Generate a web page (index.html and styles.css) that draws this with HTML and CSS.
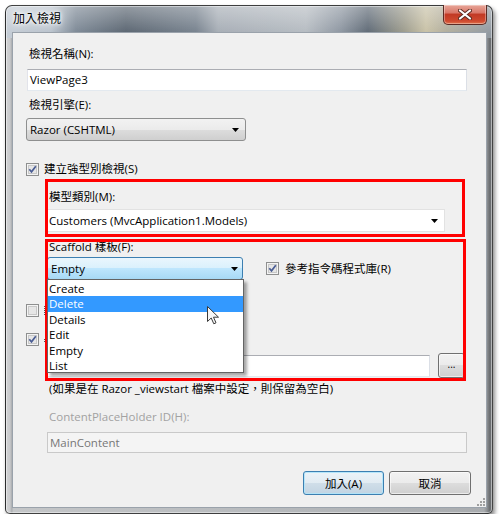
FILE: index.html
```html
<!DOCTYPE html>
<html lang="zh-Hant">
<head>
<meta charset="utf-8">
<title>加入檢視</title>
<link rel="stylesheet" href="styles.css">
</head>
<body>
<div class="window">
  <div class="titlebar">
    <span class="title">加入檢視</span>
    <div class="close">
      <svg width="14" height="11" viewBox="0 0 14 11"><path d="M2 1.5 L12 9.5 M12 1.5 L2 9.5" stroke="#5a2a20" stroke-width="4" stroke-linecap="round"/><path d="M2 1.5 L12 9.5 M12 1.5 L2 9.5" stroke="#ffffff" stroke-width="2.2" stroke-linecap="round"/></svg>
    </div>
  </div>
  <div class="client">
    <div class="label l-name">檢視名稱(N):</div>
    <div class="textbox tb-name">ViewPage3</div>
    <div class="label l-engine">檢視引擎(E):</div>
    <div class="combo razor"><span>Razor (CSHTML)</span><svg class="arrow" width="7" height="4" viewBox="0 0 7 4"><path d="M0 0h7L3.5 4z" fill="#000"/></svg></div>
    <div class="check-row cr-strong">
      <svg class="cb" width="13" height="13" viewBox="0 0 13 13"><rect x="0.5" y="0.5" width="12" height="12" fill="#f4f4f4" stroke="#8e8f8f"/><rect x="2.5" y="2.5" width="8" height="8" fill="#e6e6e6" stroke="#c8c8c8"/><path d="M3.3 6.3 L5.5 8.8 L9.8 3.3" fill="none" stroke="#4a5d94" stroke-width="1.7"/></svg>
      <span>建立強型別檢視(S)</span>
    </div>
    <div class="indent">
      <div class="label l-model">模型類別(M):</div>
      <div class="combo white cust"><span>Customers (MvcApplication1.Models)</span><svg class="arrow" width="7" height="4" viewBox="0 0 7 4"><path d="M0 0h7L3.5 4z" fill="#000"/></svg></div>
      <div class="label l-scaffold">Scaffold 樣板(F):</div>
      <div class="row scaffold-row">
        <div class="combo focused"><span>Empty</span><svg class="arrow" width="7" height="4" viewBox="0 0 7 4"><path d="M0 0h7L3.5 4z" fill="#000"/></svg></div>
        <div class="check-row cr-script">
          <svg class="cb" width="13" height="13" viewBox="0 0 13 13"><rect x="0.5" y="0.5" width="12" height="12" fill="#f4f4f4" stroke="#8e8f8f"/><rect x="2.5" y="2.5" width="8" height="8" fill="#e6e6e6" stroke="#c8c8c8"/><path d="M3.3 6.3 L5.5 8.8 L9.8 3.3" fill="none" stroke="#4a5d94" stroke-width="1.7"/></svg>
          <span>參考指令碼程式庫(R)</span>
        </div>
      </div>
    </div>
    <div class="check-row cr-partial">
      <svg class="cb" width="13" height="13" viewBox="0 0 13 13"><rect x="0.5" y="0.5" width="12" height="12" fill="#f4f4f4" stroke="#8e8f8f"/><rect x="2.5" y="2.5" width="8" height="8" fill="#e6e6e6" stroke="#c8c8c8"/></svg>
      <i class="frag"></i>
    </div>
    <div class="check-row cr-layout">
      <svg class="cb" width="13" height="13" viewBox="0 0 13 13"><rect x="0.5" y="0.5" width="12" height="12" fill="#f4f4f4" stroke="#8e8f8f"/><rect x="2.5" y="2.5" width="8" height="8" fill="#e6e6e6" stroke="#c8c8c8"/><path d="M3.3 6.3 L5.5 8.8 L9.8 3.3" fill="none" stroke="#4a5d94" stroke-width="1.7"/></svg>
      <i class="frag small"></i>
    </div>
    <div class="indent">
      <div class="row layout-row">
        <div class="textbox tb-layout"></div>
        <div class="btn browse">...</div>
      </div>
      <div class="hint">(如果是在 Razor _viewstart 檔案中設定，則保留為空白)</div>
      <div class="label disabled l-cph">ContentPlaceHolder ID(H):</div>
      <div class="textbox tb-disabled">MainContent</div>
    </div>
    <div class="buttons">
      <div class="btn default">加入(A)</div>
      <div class="btn cancel">取消</div>
    </div>

    <div class="redbox rb1"></div>
    <div class="redbox rb2"></div>

    <div class="dropdown">
      <div class="item">Create</div>
      <div class="item selected">Delete</div>
      <div class="item">Details</div>
      <div class="item">Edit</div>
      <div class="item">Empty</div>
      <div class="item">List</div>
    </div>

    <svg class="cursor" width="13" height="19" viewBox="0 0 13 19"><path d="M0.5 0.5 V15.5 L4.2 12 L6.8 17.8 L9 16.8 L6.5 11.2 L11.5 11.2 Z" fill="#f6f6f6" stroke="#3a3a3a" stroke-width="1" stroke-linejoin="round"/></svg>

    <svg class="grip" width="9" height="9" viewBox="0 0 9 9"><g fill="#a0a0a0"><rect x="7" y="1" width="2" height="2"/><rect x="4" y="4" width="2" height="2"/><rect x="7" y="4" width="2" height="2"/><rect x="1" y="7" width="2" height="2"/><rect x="4" y="7" width="2" height="2"/><rect x="7" y="7" width="2" height="2"/></g></svg>
  </div>
</div>
</body>
</html>
```

FILE: styles.css
```css
* { box-sizing: border-box; }

html, body {
  margin: 0;
  padding: 0;
  background: #ffffff;
}

body {
  font-family: "Open Sans", "Noto Sans CJK TC", sans-serif;
  font-size: 11.5px;
  color: #000;
}

.window {
  margin: 5px 0 0 5px;
  width: 488px;
  height: 509px;
  border: 1px solid rgba(20, 20, 20, 0.75);
  border-radius: 7px 7px 5px 5px;
  padding: 0 5px 5px 6px;
  background:
    linear-gradient(to bottom, rgba(255,255,255,0.35), rgba(255,255,255,0) 28px) 0 0 / 100% 32px no-repeat,
    linear-gradient(to right, #c4ccd5 0, #bac3cd 45px, #7c8895 70px, #5a6571 120px, #76818d 190px, #a6adb5 212px, #b5bbc1 300px, #8c95a0 335px, #5e6975 362px, #9c9b8c 398px, #c8c1a6 420px, #b1ad9c 440px, #8e97a1 488px) 0 0 / 100% 32px no-repeat,
    linear-gradient(to right, #d2d3d5 0, #c9cacc 4px, #a8abae 6px, #c4c6c8 7px, #b8bbbe 50%, #a9acaf 478px, #8d9093 481px, #676a6d 484px, #8f9194 488px);
  box-shadow: inset 0 0 0 1px rgba(255,255,255,0.45), 2px 3px 4px rgba(0,0,0,0.45);
}

.titlebar {
  height: 26px;
  display: flex;
  justify-content: space-between;
  align-items: flex-start;
}

.title {
  margin-top: 5px;
  padding-left: 1px;
  font-size: 12px;
  line-height: 16px;
  text-shadow: 0 0 5px #fff, 0 0 8px #fff, 0 0 3px #fff;
}

.close {
  margin-top: -1px;
  width: 44px;
  height: 20px;
  border: 1px solid #5b2b25;
  border-top: none;
  border-radius: 0 0 5px 5px;
  background: linear-gradient(to bottom, #e7a699 0, #d9786a 40%, #c23a25 50%, #cf4a2f 85%, #e0764e 100%);
  box-shadow: inset 0 0 0 1px rgba(255,255,255,0.35);
  display: flex;
  align-items: center;
  justify-content: center;
}

.client {
  position: relative;
  height: 476px;
  border: 1px solid #9aa2ab;
  background: #f0f0f0;
  padding: 0 19px 0 14px;
}

.label {
  line-height: 16px;
  height: 16px;
  padding-left: 2px;
  white-space: nowrap;
}

.l-name { margin-top: 13px; }
.l-engine { margin-top: 6px; }
.l-model { margin-top: 12px; }
.l-scaffold { margin-top: 7px; }
.l-cph { margin-top: 12px; }

.disabled { color: #a2a2a2; }

.textbox {
  height: 22px;
  background: #fff;
  border: 1px solid;
  border-color: #abadb3 #dbdfe6 #e3e9ef #e2e3ea;
  line-height: 20px;
  padding-left: 2px;
  white-space: nowrap;
}

.tb-name { margin-top: 7px; }

.combo {
  position: relative;
  height: 23px;
  border: 1px solid #8e8f8f;
  border-radius: 3px;
  background: linear-gradient(to bottom, #f2f2f2 0, #ebebeb 50%, #dddddd 50%, #cfcfcf 100%);
  line-height: 21px;
  padding-left: 3px;
  white-space: nowrap;
  display: flex;
  align-items: center;
  justify-content: space-between;
  padding-right: 6px;
}

.combo .arrow { flex: none; }

.razor {
  margin-top: 5px;
  margin-left: -1px;
  width: 220px;
}

.combo.white {
  background: #fff;
  border: 1px solid #e2e2e2;
  border-radius: 0;
  padding-left: 1px;
}

.cust {
  margin-top: 4px;
  width: 398px;
}

.combo.focused {
  width: 196px;
  height: 23px;
  border-color: #3c7fb1;
  background: linear-gradient(to bottom, #eaf6fd 0, #d9f0fc 50%, #bee6fd 50%, #a7d9f5 100%);
  padding-left: 3px;
  padding-right: 4px;
}

.check-row {
  display: flex;
  align-items: center;
  height: 16px;
  line-height: 16px;
  white-space: nowrap;
}

.check-row .cb {
  flex: none;
  margin-right: 5px;
}

/* fragments of labels that are hidden under the open drop-down */
.frag {
  display: block;
  width: 2px;
  height: 9px;
  border-left: 1px dotted #555;
  margin-top: 1px;
}

.frag.small {
  height: 3px;
  margin-top: 2px;
}

.cr-strong { margin-top: 20px; margin-left: -1px; }
.cr-partial { margin-top: 22px; margin-left: -1px; }
.cr-layout { margin-top: 13px; margin-left: -1px; }

.cr-script { margin-left: 23px; }
.cr-script .cb { margin-right: 6px; }

.indent {
  margin-left: 20px;
}

.row {
  display: flex;
  align-items: center;
}

.scaffold-row { margin-top: 2px; }

.layout-row {
  margin-top: 6px;
  height: 25px;
}

.tb-layout {
  width: 383px;
  height: 22px;
}

.btn {
  display: flex;
  align-items: center;
  justify-content: center;
  border: 1px solid #707070;
  border-radius: 3px;
  background: linear-gradient(to bottom, #f2f2f2 0, #ebebeb 50%, #dddddd 50%, #cfcfcf 100%);
  box-shadow: inset 0 0 0 1px rgba(255,255,255,0.6);
  white-space: nowrap;
}

.browse {
  margin-left: 8px;
  width: 27px;
  height: 25px;
  font-size: 10px;
  line-height: 10px;
  padding-bottom: 4px;
}

.hint {
  margin-top: 3px;
  padding-left: 2px;
  line-height: 16px;
  height: 16px;
  white-space: nowrap;
}

.tb-disabled {
  margin-top: 7px;
  height: 21px;
  background: #f4f4f4;
  border-color: #c9c9c9;
  color: #777;
  line-height: 19px;
}

.buttons {
  margin-top: 18px;
  margin-right: -4px;
  display: flex;
  justify-content: flex-end;
  gap: 5px;
}

.buttons .btn {
  width: 81px;
  height: 24px;
}

.btn.default {
  border-color: #3c7fb1;
  background: linear-gradient(to bottom, #ecf3f8 0, #e1ebf2 50%, #d0dee9 50%, #c2d4e2 100%);
  box-shadow: inset 0 0 0 1px rgba(176, 228, 250, 0.9);
}

.btn.cancel { width: 82px; }

/* annotation overlays */
.redbox {
  position: absolute;
  border: 3px solid #ff0000;
  pointer-events: none;
}

.rb1 { left: 32px; top: 146px; width: 420px; height: 58px; }
.rb2 { left: 32px; top: 206px; width: 421px; height: 142px; }

.dropdown {
  position: absolute;
  left: 34px;
  top: 246px;
  width: 197px;
  height: 94px;
  background: #fff;
  border: 1px solid #646464;
  padding-top: 1px;
  box-shadow: 3px 3px 3px rgba(0,0,0,0.35);
}

.item {
  height: 15.4px;
  line-height: 15.4px;
  padding-left: 1px;
  white-space: nowrap;
}

.item.selected {
  background: #3399ff;
  color: #fff;
}

.cursor {
  position: absolute;
  left: 194px;
  top: 273px;
}

.grip {
  position: absolute;
  right: 1px;
  bottom: 1px;
}
```
